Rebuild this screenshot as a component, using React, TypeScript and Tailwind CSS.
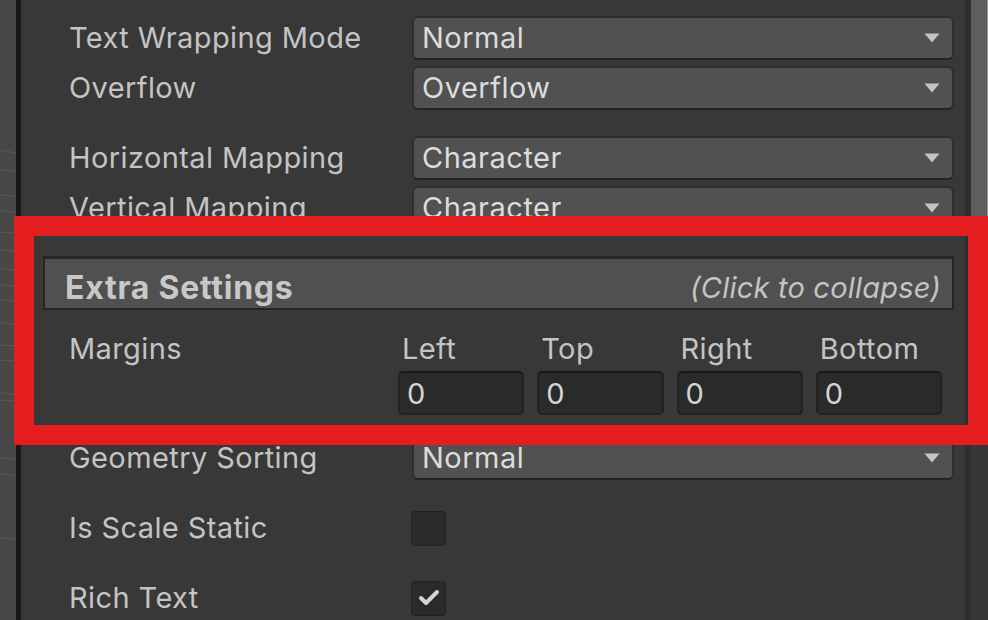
import { Check } from 'lucide-react';

const font = { fontFamily: 'Inter, "Noto Sans", sans-serif' };

function Arrow() {
  return (
    <svg width="16" height="10" viewBox="0 0 16 10" className="shrink-0">
      <path d="M0.5 0.5 H15.5 L8 9.5 Z" fill="#c4c4c4" />
    </svg>
  );
}

function DropdownRow({ label, value, className = '' }: { label: string; value: string; className?: string }) {
  return (
    <div className={`flex h-[44px] items-center pl-[48px] pr-[11px] ${className}`}>
      <div className="w-[343px] shrink-0 text-[29px] leading-[40px] tracking-[0.4px] text-[#c4c4c4]">{label}</div>
      <div className="flex h-[44px] flex-1 items-center rounded-[6px] border-2 border-[#2e2e2e] border-b-[#232323] bg-[#515151] pl-[8px] pr-[12px]">
        <span className="flex-1 text-[29px] leading-[40px] tracking-[0.5px] text-[#dcdcdc]">{value}</span>
        <Arrow />
      </div>
    </div>
  );
}

function CheckRow({ label, checked, className = '' }: { label: string; checked?: boolean; className?: string }) {
  return (
    <div className={`flex h-[40px] items-center pl-[48px] ${className}`}>
      <div className="w-[342px] shrink-0 text-[29px] leading-[40px] tracking-[0.4px] text-[#c4c4c4]">{label}</div>
      <div className="flex h-[35px] w-[35px] items-center justify-center rounded-[4px] border border-[#222222] bg-[#2a2a2a]">
        {checked && <Check size={24} strokeWidth={4} color="#d4d4d4" />}
      </div>
    </div>
  );
}

function SceneLines() {
  const ys = [150, 170, 195, 210, 232, 250, 268, 285, 300, 322, 345, 360, 392, 400, 458, 473, 538];
  return (
    <svg width="16" height="620" className="block">
      {ys.map((y, i) => (
        <line key={y} x1="0" y1={y} x2="16" y2={y + (i % 3 === 0 ? 3 : 1)} stroke="#5a5a5a" strokeWidth="1" />
      ))}
    </svg>
  );
}

export default function App() {
  const margins = ['Left', 'Top', 'Right', 'Bottom'];
  return (
    <div className="relative flex h-[620px] w-[988px] overflow-hidden bg-[#383838]" style={font}>
      {/* scene view edge */}
      <div className="w-[16px] shrink-0 bg-[#474747]">
        <SceneLines />
      </div>
      <div className="w-[5px] shrink-0 bg-[#181818]" />

      {/* inspector */}
      <div className="flex flex-1 flex-col bg-[#383838] pt-[16px]">
        <DropdownRow label="Text Wrapping Mode" value="Normal" />
        <DropdownRow label="Overflow" value="Overflow" className="mt-[6px]" />
        <DropdownRow label="Horizontal Mapping" value="Character" className="mt-[26px]" />
        <DropdownRow label="Vertical Mapping" value="Character" className="mt-[6px]" />

        <div className="ml-[22px] mr-[11px] mt-[26px] flex h-[54px] items-center border-2 border-t-[3px] border-[#262626] bg-[#505050] pl-[20px] pr-[11px] pt-[8px]">
          <span className="flex-1 text-[32px] font-bold leading-[40px] tracking-[0.75px] text-[#c8c8c8]">Extra Settings</span>
          <span className="text-[29px] italic leading-[40px] tracking-[0.2px] text-[#c4c4c4]">(Click to collapse)</span>
        </div>

        <div className="mt-[19px] flex pl-[48px]">
          <div className="w-[329px] shrink-0 text-[29px] leading-[40px] tracking-[0.4px] text-[#c4c4c4]">Margins</div>
          <div className="grid w-[544px] grid-cols-4 gap-x-[13px] gap-y-[2px]">
            {margins.map((m) => (
              <div key={m} className="pl-[4px] text-[29px] leading-[40px] tracking-[0.4px] text-[#c4c4c4]">
                {m}
              </div>
            ))}
            {margins.map((m) => (
              <div
                key={m + '-v'}
                className="h-[44px] rounded-[5px] border-2 border-[#222222] border-t-[#1a1a1a] bg-[#2a2a2a] pl-[7px] pt-[1px] text-[29px] leading-[40px] text-[#d4d4d4]"
              >
                0
              </div>
            ))}
          </div>
        </div>

        <DropdownRow label="Geometry Sorting" value="Normal" className="mt-[21px]" />
        <CheckRow label="Is Scale Static" className="mt-[28px]" />
        <CheckRow label="Rich Text" checked className="mt-[30px]" />
      </div>

      {/* scrollbar */}
      <div className="w-[6px] shrink-0 bg-[#2e2e2e]" />
      <div className="flex w-[17px] shrink-0 flex-col bg-[#363636]">
        <div className="h-[300px] border-r border-[#9a9a9a] bg-[#5e5e5e]" />
      </div>

      {/* annotation box */}
      <div className="pointer-events-none absolute left-[14px] top-[216px] h-[229px] w-[974px] border-[20px] border-[#e41e1e]" />
    </div>
  );
}
